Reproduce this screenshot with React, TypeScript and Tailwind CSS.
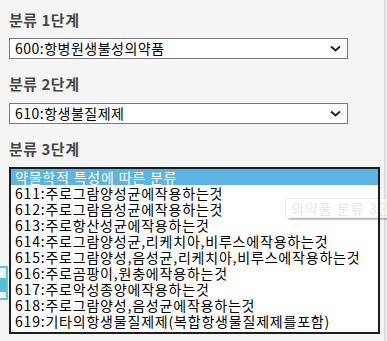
import React from 'react';

const font = { fontFamily: '"Noto Sans CJK KR", "Noto Sans", sans-serif' };

const options = [
    '611:주로그람양성균에작용하는것',
    '612:주로그람음성균에작용하는것',
    '613:주로항산성균에작용하는것',
    '614:주로그람양성균,리케치아,비루스에작용하는것',
    '615:주로그람양성,음성균,리케치아,비루스에작용하는것',
    '616:주로곰팡이,원충에작용하는것',
    '617:주로악성종양에작용하는것',
    '618:주로그람양성,음성균에작용하는것',
    '619:기타의항생물질제제(복합항생물질제제를포함)',
];

const Chevron: React.FC = () => (
    <svg width="11" height="7" viewBox="0 0 11 7" fill="none">
        <path d="M1 1.5l4.5 4 4.5-4" stroke="#1b2340" strokeWidth="2" />
    </svg>
);

const Label: React.FC<{ text: string }> = ({ text }) => (
    <div className="h-[20px] text-[15px] leading-[20px] font-bold tracking-[0.5px] text-[#474747]">{text}</div>
);

const Select: React.FC<{ value: string }> = ({ value }) => (
    <div className="flex h-[21px] w-[339px] items-center justify-between border border-[#7a7a7a] bg-white pl-[5px] pr-[6px] text-[14px] leading-[19px] tracking-[0.5px] text-black">
        <span>{value}</span>
        <Chevron />
    </div>
);

export default function App() {
    return (
        <div className="relative h-[341px] w-[387px] overflow-hidden bg-[#f5f5f5]" style={font}>
            {/* something behind the list on the left */}
            <div className="absolute left-[-20px] top-[266px] h-[34px] w-[28px] border-2 border-[#5bc6dc] bg-[#eef6f8]">
                <div className="absolute right-[0px] top-[10px] h-[14px] w-[6px] bg-[#56bfd6]" />
            </div>
            <div className="absolute right-[1px] top-0 h-full w-[2px] bg-[#dcdcdc]" />

            <div className="flex flex-col pl-[9px] pt-[10px]">
                <Label text="분류 1단계" />
                <div className="mt-[8px]">
                    <Select value="600:항병원생불성의약품" />
                </div>
                <div className="mt-[15px]">
                    <Label text="분류 2단계" />
                </div>
                <div className="mt-[9px]">
                    <Select value="610:항생불질제제" />
                </div>
                <div className="mt-[15px]">
                    <Label text="분류 3단계" />
                </div>
                <div className="relative mt-[8px] w-[371px] bg-white p-[2px] text-[14px] leading-[16px] tracking-[0.8px] text-black">
                    <div className="h-[16px] whitespace-nowrap bg-[#5bb4e2] pl-[4px] text-white">약물학적 특성에 따른 분류</div>
                    {options.map((o) => (
                        <div key={o} className="h-[16px] whitespace-nowrap pl-[4px]">{o}</div>
                    ))}
                    <div className="h-[3px]" />
                    {/* list frame drawn above the fading tooltip */}
                    <div className="pointer-events-none absolute inset-0 z-30 border-2 border-[#1e1e1e]" />
                </div>
            </div>

            {/* fading tooltip */}
            <div className="absolute left-[285px] top-[198px] z-20 h-[20px] w-[120px] whitespace-nowrap rounded-[2px] border border-[#ececec] bg-white/60 pl-[5px] text-[14px] leading-[18px] tracking-[1px] text-[#e2e2e2] shadow-[3px_2px_1px_rgba(0,0,0,0.3)] opacity-80">
                의약품 분류 3단계
            </div>
        </div>
    );
}
